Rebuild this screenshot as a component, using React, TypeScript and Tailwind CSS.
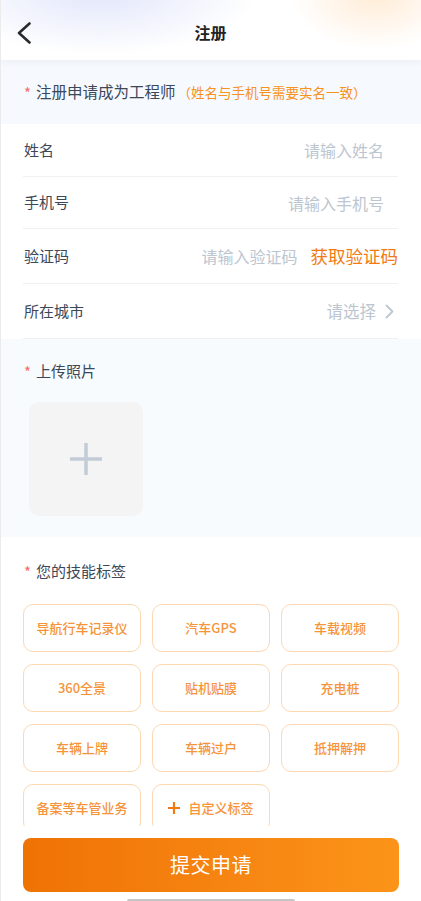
import React from "react";

const tags = [
  "导航行车记录仪",
  "汽车GPS",
  "车载视频",
  "360全景",
  "贴机贴膜",
  "充电桩",
  "车辆上牌",
  "车辆过户",
  "抵押解押",
  "备案等车管业务",
];

function Star() {
  return <span className="text-[#f46b6b] text-[15px] mr-[5px] relative top-[1px]">*</span>;
}

export default function App() {
  return (
    <div
      className="relative w-[421px] h-[901px] overflow-hidden flex flex-col bg-white"
      style={{ fontFamily: '"Noto Sans CJK SC", "Noto Sans", sans-serif' }}
    >
      <div className="absolute left-0 top-0 bottom-0 w-[1px] bg-[#ebebeb] z-20" />
      {/* Header */}
      <div className="relative h-[60px] shrink-0 bg-white shadow-[0_2px_8px_rgba(0,0,0,0.05)] z-10 overflow-hidden">
        <div className="absolute -left-[60px] -top-[70px] w-[320px] h-[125px] rounded-full bg-[radial-gradient(ellipse_at_center,#e2e6fb_0%,rgba(234,237,252,0.6)_40%,rgba(255,255,255,0)_70%)]" />
        <div className="absolute left-[290px] -top-[60px] w-[170px] h-[110px] rounded-full bg-[radial-gradient(ellipse_at_center,#ffecd6_0%,rgba(255,241,226,0.6)_40%,rgba(255,255,255,0)_70%)]" />
        <div className="relative h-full flex items-center justify-center">
          <svg
            className="absolute left-[16px] top-[22px]"
            width="16"
            height="22"
            viewBox="0 0 16 22"
            fill="none"
          >
            <path d="M13.5 1.5 L3 11 L13.5 20.5" stroke="#2b2b2b" strokeWidth="2.6" strokeLinecap="round" strokeLinejoin="round" />
          </svg>
          <span className="text-[16px] font-bold text-[#222] relative top-[2px]">注册</span>
        </div>
      </div>

      {/* Content */}
      <div className="flex-1 overflow-hidden">
        <div className="bg-[#f6f9fd] h-[64px] flex items-center pl-[24px]">
          <Star />
          <span className="text-[15.5px] text-[#3b4859]">注册申请成为工程师</span>
          <span className="text-[13.5px] text-[#f7921e] ml-[2px]">（姓名与手机号需要实名一致）</span>
        </div>

        <div className="bg-white px-[23px]">
          <div className="h-[53px] flex items-center justify-between border-b border-[#eff1f4]">
            <span className="text-[15px] text-[#3b4859] pl-[1px]">姓名</span>
            <span className="text-[16px] text-[#bcc6d0] pr-[14px]">请输入姓名</span>
          </div>
          <div className="h-[52px] flex items-center justify-between border-b border-[#eff1f4]">
            <span className="text-[15px] text-[#3b4859] pl-[1px]">手机号</span>
            <span className="text-[16px] text-[#bcc6d0] pr-[14px]">请输入手机号</span>
          </div>
          <div className="h-[55px] flex items-center justify-between border-b border-[#eff1f4]">
            <span className="text-[15px] text-[#3b4859] pl-[1px]">验证码</span>
            <div className="flex items-center">
              <span className="text-[16px] text-[#bcc6d0]">请输入验证码</span>
              <span className="text-[17.5px] text-[#f27a12] ml-[13px]">获取验证码</span>
            </div>
          </div>
          <div className="h-[55px] flex items-center justify-between border-b border-[#eff1f4]">
            <span className="text-[15px] text-[#3b4859] pl-[1px]">所在城市</span>
            <div className="flex items-center">
              <span className="text-[16.5px] text-[#bcc6d0]">请选择</span>
              <svg className="ml-[9px] mr-[4px]" width="9" height="15" viewBox="0 0 9 15" fill="none">
                <path d="M1.5 1.5 L7.5 7.5 L1.5 13.5" stroke="#bcc6d0" strokeWidth="1.8" strokeLinecap="round" strokeLinejoin="round" />
              </svg>
            </div>
          </div>
        </div>

        <div className="bg-[#f7fbfe] pt-[21px] pb-[21px] pl-[24px]">
          <div className="h-[22px] flex items-center">
            <Star />
            <span className="text-[15px] text-[#3b4859]">上传照片</span>
          </div>
          <div className="mt-[20px] ml-[5px] w-[114px] h-[114px] rounded-[10px] bg-[#f4f4f4] flex items-center justify-center">
            <svg width="34" height="34" viewBox="0 0 34 34" fill="none">
              <path d="M17 1 V33 M1 17 H33" stroke="#c3ccd6" strokeWidth="3.5" />
            </svg>
          </div>
        </div>

        <div className="bg-white pt-[23px]">
          <div className="h-[22px] flex items-center pl-[24px]">
            <Star />
            <span className="text-[15px] text-[#3b4859]">您的技能标签</span>
          </div>
          <div className="grid grid-cols-3 gap-x-[11px] gap-y-[12px] pl-[23px] pr-[22px] mt-[22px]">
            {tags.map((t) => (
              <div
                key={t}
                className="h-[48px] rounded-[10px] border border-[#fcd9b2] flex items-center justify-center text-[13px] font-medium text-[#f5943a]"
              >
                {t}
              </div>
            ))}
            <div className="h-[48px] rounded-[10px] border border-[#fcd9b2] flex items-center justify-center text-[13px] font-medium text-[#f5943a]">
              <svg className="mr-[8px]" width="12" height="12" viewBox="0 0 12 12" fill="none">
                <path d="M6 0 V12 M0 6 H12" stroke="#f27a12" strokeWidth="2.2" />
              </svg>
              自定义标签
            </div>
          </div>
        </div>
      </div>

      {/* Bottom bar */}
      <div className="shrink-0 bg-white pt-[12px] pl-[23px] pr-[22px] flex flex-col items-center">
        <div className="w-full h-[54px] rounded-[8px] bg-gradient-to-r from-[#ef7205] to-[#fc9419] flex items-center justify-center">
          <span className="text-[20px] text-white tracking-[0.5px]">提交申请</span>
        </div>
        <div className="mt-[7px] w-[168px] h-[2px] bg-[#c6c6c6] rounded-t-full" />
      </div>
    </div>
  );
}
